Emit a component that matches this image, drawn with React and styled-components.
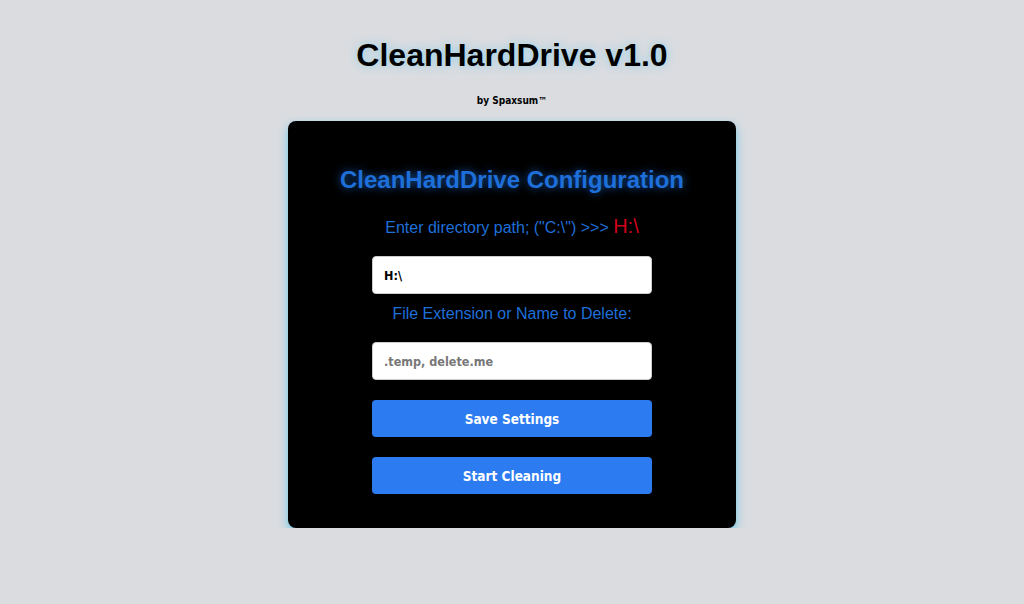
// Imports
import styled, {createGlobalStyle} from 'styled-components'


// Styles
const GlobalStyle = createGlobalStyle`
    body{
        margin:0;
        background:#dadce0;
        font-family:"Liberation Sans", Arial, sans-serif;
    }
`
const Page = styled.main`
    display:flex;
    flex-direction:column;
    align-items:center;
    padding-top:37px;
`
const Title = styled.h1`
    margin:0;
    font-size:32px;
    line-height:37px;
    font-weight:700;
    color:#000;
    text-shadow:0 0 8px rgba(135,206,235,0.9);
`
const Byline = styled.p`
    margin:21px 0 0;
    font-family:"DejaVu Sans Condensed", "DejaVu Sans", sans-serif;
    font-size:10px;
    line-height:12px;
    font-weight:700;
    color:#000;
`
const Card = styled.section`
    margin-top:14px;
    width:448px;
    box-sizing:border-box;
    padding:45px 0 34px;
    background:#000;
    border-radius:8px;
    box-shadow:0 4px 10px rgba(100,200,235,0.95);
    display:flex;
    flex-direction:column;
    align-items:center;
`
const Heading = styled.h2`
    margin:0;
    font-size:24px;
    line-height:28px;
    font-weight:700;
    color:#1e6fd9;
    text-shadow:0 0 8px rgba(30,111,217,0.8);
`
const Label = styled.label`
    display:block;
    margin-top:${({top}) => top}px;
    font-size:16px;
    line-height:${({lh}) => lh}px;
    color:#1e6fd9;
`
const Path = styled.span`
    font-size:20px;
    color:#d0021b;
`
const Field = styled.input`
    margin-top:${({top}) => top}px;
    width:280px;
    height:38px;
    box-sizing:border-box;
    padding:0 11px;
    border:1px solid #ccc;
    border-radius:4px;
    background:#fff;
    font-family:"DejaVu Sans Condensed", "DejaVu Sans", sans-serif;
    font-size:12.5px;
    font-weight:700;
    color:#000;
    outline:none;

    &::placeholder{
        color:#777;
    }
`
const Button = styled.button`
    margin-top:${({top}) => top}px;
    width:280px;
    height:37px;
    border:none;
    border-radius:4px;
    background:#2c7bf0;
    color:#fff;
    font-family:"DejaVu Sans Condensed", "DejaVu Sans", sans-serif;
    font-size:13.5px;
    font-weight:700;
    cursor:pointer;
`


// Main Function
const App = () => {
    return (
        <>
            <GlobalStyle />
            <Page>
                <Title>CleanHardDrive v1.0</Title>
                <Byline>by Spaxsum™</Byline>
                <Card>
                    <Heading>CleanHardDrive Configuration</Heading>
                    <Label top={21} lh={23}>Enter directory path; ("C:\") &gt;&gt;&gt; <Path>H:\</Path></Label>
                    <Field top={17} defaultValue='H:\' />
                    <Label top={10} lh={20}>File Extension or Name to Delete:</Label>
                    <Field top={18} placeholder='.temp, delete.me' />
                    <Button top={20}>Save Settings</Button>
                    <Button top={20}>Start Cleaning</Button>
                </Card>
            </Page>
        </>
    )
}


// Export
export default App;
